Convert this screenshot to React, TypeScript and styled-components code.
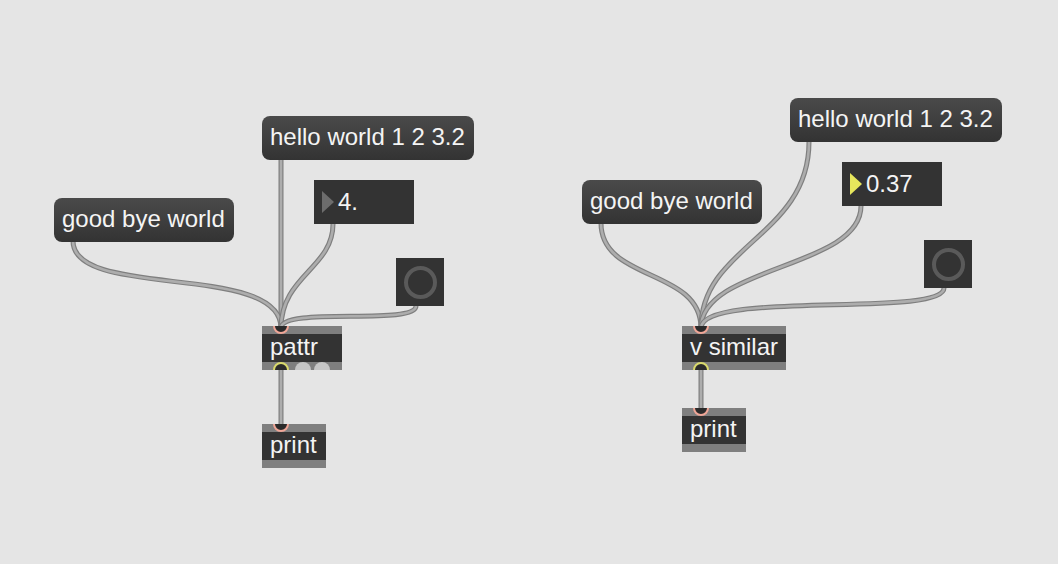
import React from 'react'
import styled, { createGlobalStyle } from 'styled-components'

const GlobalStyle = createGlobalStyle`
  html, body {
    margin: 0;
    padding: 0;
    background: #e5e5e5;
  }
  body {
    font-family: "Liberation Sans", Arial, sans-serif;
  }
`

const Canvas = styled.div`
  position: relative;
  width: 1058px;
  height: 564px;
  overflow: hidden;
  background: #e5e5e5;
`

const CordLayer = styled.svg`
  position: absolute;
  left: 0;
  top: 0;
  width: 1058px;
  height: 564px;
`

interface NodeProps {
  $x: number
  $y: number
  $w: number
}

const MessageBox = styled.div<NodeProps>`
  position: absolute;
  left: ${(p) => p.$x}px;
  top: ${(p) => p.$y}px;
  width: ${(p) => p.$w}px;
  height: 44px;
  box-sizing: border-box;
  padding: 0 8px;
  border-radius: 8px;
  background: linear-gradient(#4a4a4a, #333333);
  color: #f4f4f4;
  font-size: 24px;
  line-height: 42px;
  white-space: nowrap;
`

const NumberBox = styled.div<NodeProps>`
  position: absolute;
  left: ${(p) => p.$x}px;
  top: ${(p) => p.$y}px;
  width: ${(p) => p.$w}px;
  height: 44px;
  box-sizing: border-box;
  padding-left: 8px;
  display: flex;
  align-items: center;
  background: #333333;
  color: #f4f4f4;
  font-size: 24px;
`

const Arrow = styled.span<{ $active?: boolean }>`
  width: 0;
  height: 0;
  border-left: 12px solid ${(p) => (p.$active ? '#e6e65c' : '#6d6d6d')};
  border-top: 11px solid transparent;
  border-bottom: 11px solid transparent;
  margin-right: 4px;
`

const NumberValue = styled.span`
  line-height: 42px;
`

const ToggleBox = styled.div<{ $x: number; $y: number }>`
  position: absolute;
  left: ${(p) => p.$x}px;
  top: ${(p) => p.$y}px;
  width: 48px;
  height: 48px;
  background: #333333;
  display: flex;
  align-items: center;
  justify-content: center;
`

const ToggleRing = styled.span`
  width: 33px;
  height: 33px;
  box-sizing: border-box;
  border: 4px solid #5a5a5a;
  border-radius: 50%;
`

const ObjectBox = styled.div<NodeProps>`
  position: absolute;
  left: ${(p) => p.$x}px;
  top: ${(p) => p.$y}px;
  width: ${(p) => p.$w}px;
  display: flex;
  flex-direction: column;
  overflow: hidden;
`

const PortBar = styled.div`
  height: 8px;
  background: #7f7f7f;
`

const ObjectBody = styled.div`
  height: 28px;
  background: #333333;
  color: #f4f4f4;
  font-size: 24px;
  line-height: 25px;
  padding-left: 8px;
  white-space: nowrap;
`

const Port = styled.span<{ $at: number; $kind: 'inlet' | 'outlet' | 'idle' }>`
  position: absolute;
  left: ${(p) => p.$at - 8}px;
  ${(p) => (p.$kind === 'inlet' ? 'top: -8px;' : 'bottom: -8px;')}
  width: 16px;
  height: 16px;
  box-sizing: border-box;
  border-radius: 50%;
  background: ${(p) => (p.$kind === 'idle' ? '#c6c6c6' : '#2b2b2b')};
  border: ${(p) =>
    p.$kind === 'inlet' ? '2px solid #f0a697' : p.$kind === 'outlet' ? '2px solid #d9d96c' : 'none'};
`

const Cord = ({ d }: { d: string }) => (
  <g fill="none" strokeLinecap="round">
    <path d={d} stroke="#7f7f7f" strokeWidth={5} />
    <path d={d} stroke="#adadad" strokeWidth={2.6} />
  </g>
)

const Obj = ({
  x,
  y,
  w,
  label,
  outlets
}: {
  x: number
  y: number
  w: number
  label: string
  outlets: { at: number; kind: 'outlet' | 'idle' }[]
}) => (
  <ObjectBox $x={x} $y={y} $w={w}>
    <PortBar />
    <ObjectBody>{label}</ObjectBody>
    <PortBar />
    <Port $at={19} $kind="inlet" />
    {outlets.map((o, i) => (
      <Port key={i} $at={o.at} $kind={o.kind} />
    ))}
  </ObjectBox>
)

const cords = [
  // left patch
  'M281 160 L281 328',
  'M73 241 C73 300 281 262 281 328',
  'M333 224 C333 268 281 276 281 328',
  'M416 306 C416 326 281 306 281 328',
  'M281 370 L281 426',
  // right patch
  'M601 223 C601 282 701 268 701 328',
  'M809 142 C809 236 701 246 701 328',
  'M861 206 C861 268 701 266 701 328',
  'M944 288 C944 318 701 290 701 328',
  'M701 370 L701 410'
]

export default function App() {
  return (
    <>
      <GlobalStyle />
      <Canvas>
        <CordLayer viewBox="0 0 1058 564">
          {cords.map((d, i) => (
            <Cord key={i} d={d} />
          ))}
        </CordLayer>

        <MessageBox $x={262} $y={116} $w={212}>hello world 1 2 3.2</MessageBox>
        <MessageBox $x={54} $y={198} $w={180}>good bye world</MessageBox>
        <NumberBox $x={314} $y={180} $w={100}>
          <Arrow />
          <NumberValue>4.</NumberValue>
        </NumberBox>
        <ToggleBox $x={396} $y={258}>
          <ToggleRing />
        </ToggleBox>
        <Obj
          x={262}
          y={326}
          w={80}
          label="pattr"
          outlets={[
            { at: 19, kind: 'outlet' },
            { at: 41, kind: 'idle' },
            { at: 60, kind: 'idle' }
          ]}
        />
        <Obj x={262} y={424} w={64} label="print" outlets={[]} />

        <MessageBox $x={790} $y={98} $w={212}>hello world 1 2 3.2</MessageBox>
        <MessageBox $x={582} $y={180} $w={180}>good bye world</MessageBox>
        <NumberBox $x={842} $y={162} $w={100}>
          <Arrow $active />
          <NumberValue>0.37</NumberValue>
        </NumberBox>
        <ToggleBox $x={924} $y={240}>
          <ToggleRing />
        </ToggleBox>
        <Obj x={682} y={326} w={104} label="v similar" outlets={[{ at: 19, kind: 'outlet' }]} />
        <Obj x={682} y={408} w={64} label="print" outlets={[]} />
      </Canvas>
    </>
  )
}
